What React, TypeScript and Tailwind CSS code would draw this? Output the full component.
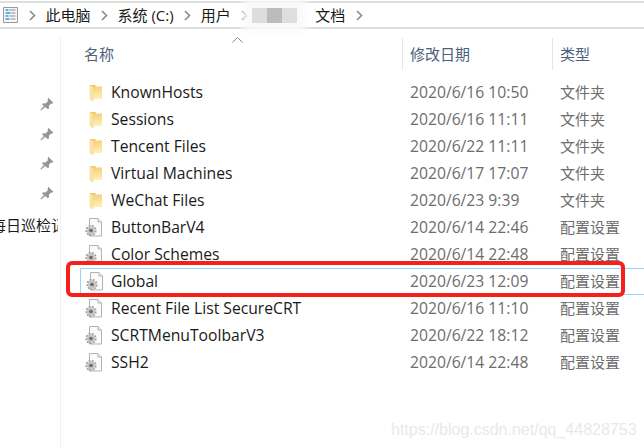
import { Fragment } from "react";

const FONT = "[font-family:'Open_Sans','Noto_Sans_CJK_SC',sans-serif]";

const rows = [
  { name: "KnownHosts", date: "2020/6/16 10:50", type: "文件夹", folder: true },
  { name: "Sessions", date: "2020/6/16 11:11", type: "文件夹", folder: true },
  { name: "Tencent Files", date: "2020/6/22 11:11", type: "文件夹", folder: true },
  { name: "Virtual Machines", date: "2020/6/17 17:07", type: "文件夹", folder: true },
  { name: "WeChat Files", date: "2020/6/23 9:39", type: "文件夹", folder: true },
  { name: "ButtonBarV4", date: "2020/6/14 22:46", type: "配置设置" },
  { name: "Color Schemes", date: "2020/6/14 22:48", type: "配置设置" },
  { name: "Global", date: "2020/6/23 12:09", type: "配置设置", selected: true },
  { name: "Recent File List SecureCRT", date: "2020/6/16 11:10", type: "配置设置" },
  { name: "SCRTMenuToolbarV3", date: "2020/6/22 18:12", type: "配置设置" },
  { name: "SSH2", date: "2020/6/14 22:48", type: "配置设置" },
];

const crumbs = ["此电脑", "系统 (C:)", "用户"];

function Chevron() {
  return (
    <svg className="-mr-[1px] shrink-0" width="7" height="11" viewBox="0 0 7 11" fill="none" stroke="#8a8a8a" strokeWidth="1.6">
      <path d="M1 1l4.500 4.500L1 10" />
    </svg>
  );
}

function DocIcon() {
  return (
    <svg className="mr-[0.5px] shrink-0" width="15" height="16" viewBox="0 0 15 16">
      <path d="M.5.5h14v15H.5z" fill="#f6f6f6" stroke="#9a9a9a" />
      <path d="M2.500 3h3M2.500 6h5M2.500 9h3M2.500 12h4" stroke="#2f9be0" strokeWidth="1.400" />
      <path d="M6.500 3h6M8.500 6h4M6.500 9h6M7.500 12h5" stroke="#8d8d8d" />
    </svg>
  );
}

function FolderIcon() {
  return (
    <svg width="14" height="18" viewBox="0 0 14 18">
      <defs>
        <linearGradient id="fold" x1="0" y1="0" x2="0" y2="1">
          <stop offset="0" stopColor="#f5d27a" />
          <stop offset="1" stopColor="#fff0bd" />
        </linearGradient>
      </defs>
      <path d="M1 1h5l1 1v13H1z" fill="#f0c765" />
      <path d="M3 2.500h10V15H3z" fill="url(#fold)" />
      <path d="M1 1l3 2v14l-3-2z" fill="#fde7a8" stroke="#eccb7c" strokeWidth=".5" />
    </svg>
  );
}

function ConfigIcon() {
  return (
    <svg width="18" height="19" viewBox="0 0 18 19">
      <path d="M4.500.5h8.500l3.500 3.500v14h-12z" fill="#fbfbfb" stroke="#b3b3b3" />
      <path d="M13 .5V4h3.500" fill="#ececec" stroke="#b3b3b3" />
      <circle cx="6" cy="12.500" r="4.700" fill="none" stroke="#9c9c9c" strokeWidth="1.800" strokeDasharray="1.900 1.300" />
      <circle cx="6" cy="12.500" r="4" fill="#c4c4c4" />
      <circle cx="6" cy="12.500" r="1.800" fill="#6a6a6a" />
    </svg>
  );
}

function PinIcon() {
  return (
    <svg width="14" height="14" viewBox="0 0 13 13" fill="#8f969c">
      <path d="M7.600.6l4.800 4.800-1 .8-1-.2-2.200 2.200.2 2.200-1 1L1.900 6.900l1-1 2.200.2 2.200-2.200-.2-1z" />
      <path d="M3.800 8.200l1 1L1 12.500l-.6-.6z" />
    </svg>
  );
}

export default function App() {
  return (
    <div className={`relative flex h-[448px] w-[644px] flex-col overflow-hidden bg-white ${FONT}`}>
      <header className="mt-px flex h-[28px] shrink-0 items-center gap-[10.5px] border-y-2 border-[#dedede] pl-[3px] text-[15px] text-[#1a1a1a]">
        <DocIcon />
        {crumbs.map((c) => (
          <Fragment key={c}>
            <Chevron />
            <span>{c}</span>
          </Fragment>
        ))}
        <Chevron />
        <div className="-ml-[5.5px] flex h-[15px] shadow-[0_0_8px_9px_#fafafa]">
          <span className="w-[15px] bg-[#dddddd]" />
          <span className="w-[15px] bg-[#bcbcbc]" />
          <span className="w-[15px] bg-[#dedede]" />
        </div>
        <span className="ml-[7.5px]">文档</span>
        <Chevron />
      </header>

      <div className="flex min-h-0 flex-1">
        <nav className="mt-[9px] w-[61px] shrink-0 overflow-hidden border-r border-[#f0f0f0] pt-[59px]">
          <div className="flex flex-col items-end gap-[15.6px] pr-[6px]">
            {[0, 1, 2, 3].map((i) => (
              <PinIcon key={i} />
            ))}
          </div>
          <div className="mt-[15px] w-[58px] overflow-hidden">
            <span className="-ml-[9px] block whitespace-nowrap text-[15px] leading-5 text-[#1a1a1a]">每日巡检记录</span>
          </div>
        </nav>

        <main className="min-w-0 flex-1">
          <div className="relative mt-[9px] flex h-[32px] text-[15px] text-[#4c607a]">
            <span className="absolute left-[171px] top-[-1px]">
              <svg width="11" height="6" viewBox="0 0 11 6" fill="none" stroke="#8a8a8a">
                <path d="M.5 5.500l5-5 5 5" />
              </svg>
            </span>
            <div className="flex w-[341px] items-center pl-[23px] pt-[1px]">名称</div>
            <div className="flex w-[150px] items-center border-l border-[#e5e5e5] pl-[7px] pt-[1px]">修改日期</div>
            <div className="flex flex-1 items-center border-l border-[#e5e5e5] pl-[7px] pt-[1px]">类型</div>
          </div>

          <ul className="mt-[9px] pl-[20px]">
            {rows.map((r) => (
              <li
                key={r.name}
                className={`flex h-[27px] items-center ${r.selected ? "-ml-px border border-r-0 border-[#99d1ff] pl-px" : ""}`}
              >
                <span className={`flex w-[30px] shrink-0 ${r.folder ? "pl-[7.5px]" : "pl-[4px]"}`}>
                  {r.folder ? <FolderIcon /> : <ConfigIcon />}
                </span>
                <span className={`w-[299px] shrink-0 whitespace-nowrap text-[15.7px] text-[#1a1a1a] ${r.selected ? "-ml-px" : ""}`}>{r.name}</span>
                <span className="w-[150px] shrink-0 whitespace-nowrap text-[15.7px] text-[#6d6d6d]">{r.date}</span>
                <span className="whitespace-nowrap text-[15px] text-[#6d6d6d]">{r.type}</span>
              </li>
            ))}
          </ul>
        </main>
      </div>

      {/* red annotation over the selected row */}
      <div className="absolute left-[66px] top-[261px] h-[36px] w-[559px] rounded-[6px] border-4 border-[#f5201a]" />
      {/* csdn watermark */}
      <span className="absolute left-[391px] top-[418px] whitespace-nowrap [font-family:'Liberation_Sans',sans-serif] text-[16px] text-[#e9e9e9]">
        https://blog.csdn.net/qq_44828753
      </span>
    </div>
  );
}
